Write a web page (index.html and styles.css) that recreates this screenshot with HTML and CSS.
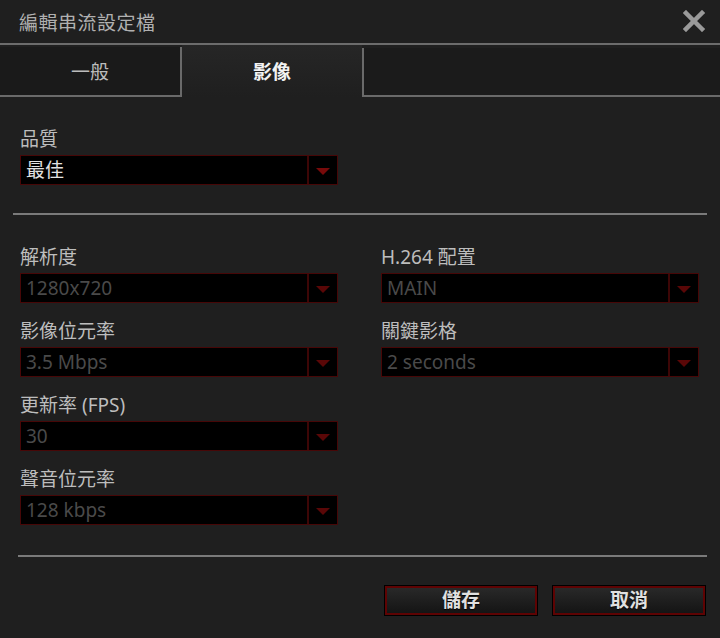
FILE: index.html
```html
<!DOCTYPE html>
<html lang="zh-Hant">
<head>
<meta charset="utf-8">
<title>編輯串流設定檔</title>
<link rel="stylesheet" href="styles.css">
</head>
<body>
<div class="dialog">
  <header class="titlebar">
    <span class="title">編輯串流設定檔</span>
    <svg class="close" width="22" height="22" viewBox="0 0 22 22" aria-label="close">
      <path d="M3 3 L19 19 M19 3 L3 19" stroke="#9a9a9a" stroke-width="4.5" stroke-linecap="square" fill="none"/>
    </svg>
  </header>

  <nav class="tabs">
    <div class="tab">一般</div>
    <div class="tab active">影像</div>
    <div class="tab-filler"></div>
  </nav>

  <section class="quality">
    <div class="field-group">
      <div class="label">品質</div>
      <div class="select">
        <span class="value">最佳</span>
        <span class="arrow"><i></i></span>
      </div>
    </div>
  </section>

  <hr class="sep sep-top">

  <section class="grid">
    <div class="col">
      <div class="field-group">
        <div class="label">解析度</div>
        <div class="select disabled"><span class="value">1280x720</span><span class="arrow"><i></i></span></div>
      </div>
      <div class="field-group">
        <div class="label">影像位元率</div>
        <div class="select disabled"><span class="value">3.5 Mbps</span><span class="arrow"><i></i></span></div>
      </div>
      <div class="field-group">
        <div class="label">更新率 (FPS)</div>
        <div class="select disabled"><span class="value">30</span><span class="arrow"><i></i></span></div>
      </div>
      <div class="field-group">
        <div class="label">聲音位元率</div>
        <div class="select disabled"><span class="value">128 kbps</span><span class="arrow"><i></i></span></div>
      </div>
    </div>
    <div class="col">
      <div class="field-group">
        <div class="label">H.264 配置</div>
        <div class="select disabled"><span class="value">MAIN</span><span class="arrow"><i></i></span></div>
      </div>
      <div class="field-group">
        <div class="label">關鍵影格</div>
        <div class="select disabled"><span class="value">2 seconds</span><span class="arrow"><i></i></span></div>
      </div>
    </div>
  </section>

  <hr class="sep sep-bottom">

  <footer class="buttons">
    <button class="btn">儲存</button>
    <button class="btn">取消</button>
  </footer>
</div>
</body>
</html>
```

FILE: styles.css
```css
html, body {
  margin: 0;
  padding: 0;
  background: #1f1f1f;
}
body {
  width: 720px;
  height: 638px;
  overflow: hidden;
  font-family: "Noto Sans", "Noto Sans CJK TC", sans-serif;
  color: #bdbdbd;
}
.dialog {
  display: flex;
  flex-direction: column;
}
.titlebar {
  height: 45px;
  box-sizing: border-box;
  border-bottom: 2px solid #6c6c6c;
  display: flex;
  align-items: center;
  justify-content: space-between;
  padding: 0 15px 0 19px;
}
.title {
  font-size: 19px;
  color: #b0b0b0;
  letter-spacing: 0.5px;
}
.close {
  display: block;
  margin-top: -2px;
}
.tabs {
  display: flex;
  height: 52px;
}
.tab {
  box-sizing: border-box;
  width: 182px;
  margin-top: 2px;
  background: #1a1a1a;
  border-right: 2px solid #6a6a6a;
  border-bottom: 2px solid #6a6a6a;
  display: flex;
  align-items: center;
  justify-content: center;
  font-size: 19px;
  color: #bcbcbc;
}
.tab.active {
  width: 180px;
  margin-top: 0;
  background: linear-gradient(#262626, #1f1f1f);
  border: none;
  color: #f2f2f2;
  font-weight: bold;
}
.tab-filler {
  flex: 1;
  margin-top: 3px;
  background: #1b1b1b;
  border-left: 2px solid #6a6a6a;
  border-bottom: 2px solid #6a6a6a;
}
.quality {
  padding: 30px 0 0 20px;
}
.field-group {
  display: flex;
  flex-direction: column;
  width: 318px;
}
.label {
  height: 24px;
  line-height: 24px;
  font-size: 19px;
  color: #bdbdbd;
  margin-bottom: 4px;
  white-space: nowrap;
}
.select {
  box-sizing: border-box;
  height: 30px;
  border: 1px solid #470707;
  background: #000;
  display: flex;
  align-items: stretch;
}
.select .value {
  flex: 1;
  padding-left: 5px;
  line-height: 28px;
  font-size: 19px;
  color: #e2e2e2;
}
.select.disabled .value {
  color: #4a4a4a;
}
.select .arrow {
  width: 28px;
  border-left: 2px solid #3d0606;
  display: flex;
  align-items: center;
  justify-content: center;
}
.select .arrow i {
  width: 0;
  height: 0;
  border-left: 7px solid transparent;
  border-right: 7px solid transparent;
  border-top: 7px solid #780a0a;
  margin-top: 2px;
}
.select.disabled .arrow i {
  border-top-color: #5a0707;
}
.sep {
  border: none;
  height: 2px;
  background: #7a7a7a;
  margin: 0;
}
.sep-top {
  margin: 28px 13px 0 13px;
}
.grid {
  display: flex;
  gap: 43px;
  padding: 30px 0 0 20px;
}
.col {
  display: flex;
  flex-direction: column;
  gap: 16px;
}
.sep-bottom {
  margin: 30px 13px 0 18px;
}
.buttons {
  display: flex;
  justify-content: flex-end;
  gap: 14px;
  padding: 28px 14px 0 0;
}
.btn {
  box-sizing: border-box;
  width: 154px;
  height: 31px;
  border: 1px solid #000;
  box-shadow: inset 0 0 0 2px #5e0303;
  background: linear-gradient(#2a2a2a, #131313);
  font-family: "Noto Sans", "Noto Sans CJK TC", sans-serif;
  font-size: 19px;
  font-weight: bold;
  color: #e0e0e0;
  text-shadow: 0 1px 1px #000;
  padding: 0;
  line-height: 27px;
}
```
